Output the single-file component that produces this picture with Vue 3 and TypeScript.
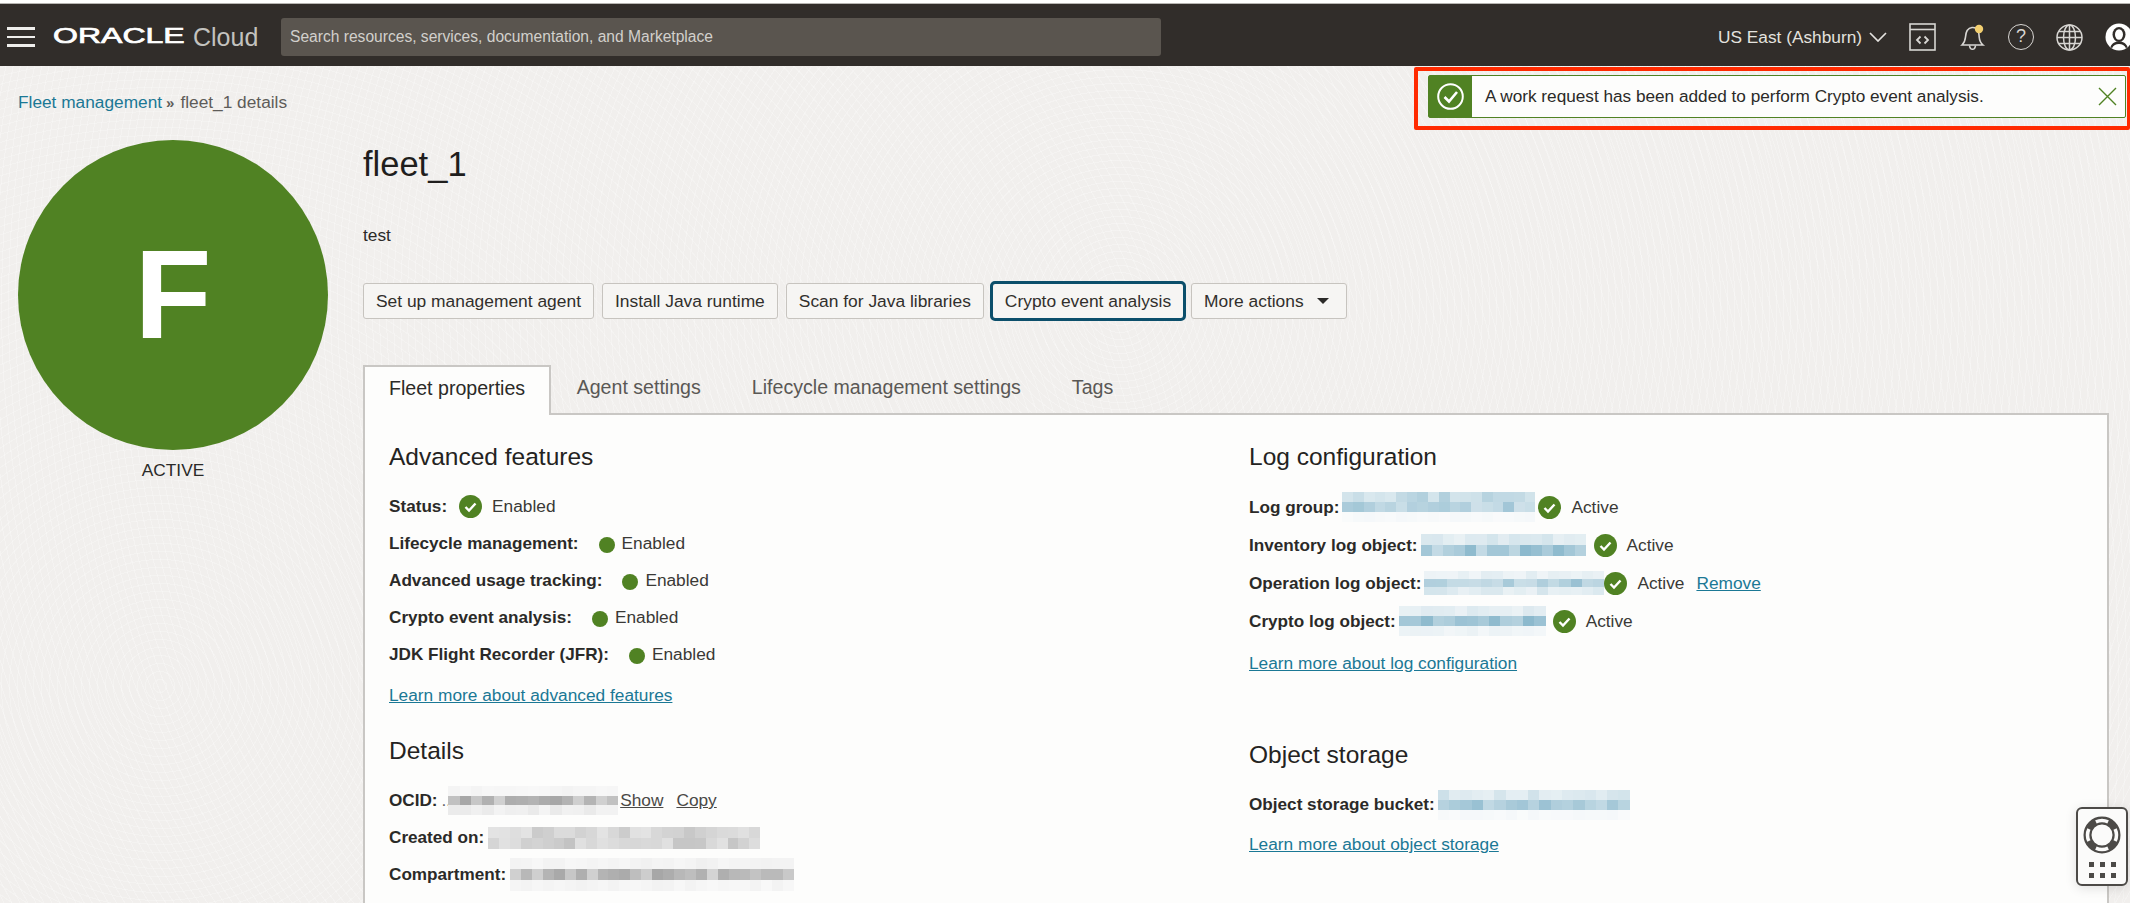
<script setup lang="ts">
type Cell = { color: string }

const greyBase: [number, number, number] = [160, 160, 160]
const blueBase: [number, number, number] = [135, 182, 203]

function mosaic(seed: number, width: number, height: number, base: [number, number, number], rows: number[]) {
  let s = seed
  const cols = Math.round(width / 11)
  const cells: Cell[] = []
  for (let r = 0; r < rows.length; r++) {
    for (let c = 0; c < cols; c++) {
      s = (s * 1103515245 + 12345) % 2147483648
      const k = Math.min(1, rows[r] * (0.55 + (s % 100) / 160))
      const mix = (i: number) => Math.round(253 + (base[i] - 253) * k)
      cells.push({ color: `rgb(${mix(0)},${mix(1)},${mix(2)})` })
    }
  }
  return {
    cells,
    style: {
      width: `${width}px`,
      height: `${height}px`,
      gridTemplateColumns: `repeat(${cols}, 1fr)`,
      gridTemplateRows: `repeat(${rows.length}, 1fr)`,
    },
  }
}

const features = [
  { label: 'Lifecycle management:' },
  { label: 'Advanced usage tracking:' },
  { label: 'Crypto event analysis:' },
  { label: 'JDK Flight Recorder (JFR):' },
]

const logs = [
  { label: 'Log group:', blur: mosaic(7, 193, 30, blueBase, [0.55, 0.7, 0.06]), remove: false, gap: 3 },
  { label: 'Inventory log object:', blur: mosaic(19, 165, 22, blueBase, [0.3, 0.85]), remove: false, gap: 8 },
  { label: 'Operation log object:', blur: mosaic(31, 180, 24, blueBase, [0.2, 0.8, 0.3]), remove: true, gap: 0 },
  { label: 'Crypto log object:', blur: mosaic(43, 147, 30, blueBase, [0.25, 0.85, 0.15]), remove: false, gap: 7 },
]

const ocidBlur = mosaic(5, 170, 29, greyBase, [0.1, 0.8, 0.18])
const createdBlur = mosaic(11, 272, 22, greyBase, [0.5, 0.55])
const compartmentBlur = mosaic(23, 284, 33, greyBase, [0.12, 0.8, 0.1])
const bucketBlur = mosaic(37, 192, 30, blueBase, [0.35, 0.75, 0.06])
</script>

<template>
  <div class="page">
    <header class="topbar">
      <button class="burger" aria-label="Menu"><span></span><span></span><span></span></button>
      <div class="brand">
        <span class="wordmark"><span>ORACLE</span></span>
        <span class="cloud">Cloud</span>
      </div>
      <div class="search">Search resources, services, documentation, and Marketplace</div>
      <div class="region">
        US East (Ashburn)
        <svg width="18" height="10" viewBox="0 0 18 10" fill="none" stroke="#e4e2df" stroke-width="1.7"><path d="M1 1l8 8 8-8" /></svg>
      </div>
      <div class="tools">
        <svg class="tool-code" width="27" height="28" viewBox="0 0 27 28" fill="none" stroke="#d8d6d3" stroke-width="1.6">
          <rect x="1" y="1" width="25" height="26" />
          <path d="M1 6.500h25" />
          <path d="M11.500 13.500l-3.500 3.500 3.500 3.500M15.500 13.500l3.500 3.500-3.500 3.500" stroke-width="1.800" />
        </svg>
        <svg width="26" height="28" viewBox="0 0 26 28" fill="none" stroke="#d8d6d3" stroke-width="1.6">
          <path d="M2 22c2-2 3.200-4 3.500-8 .3-5 2.500-9 6.500-9.500 3-.3 5 1 6.200 3.500.8 2 .8 4 1 6 .3 4 1.500 6 3.800 8z" />
          <path d="M9.500 22.500c.3 2.500 1.500 3.800 3 3.800s2.700-1.300 3-3.800" />
          <circle cx="19" cy="6" r="4.200" fill="#f3cf70" stroke="none" />
        </svg>
        <div class="help-ico">?</div>
        <svg width="27" height="27" viewBox="0 0 27 27" fill="none" stroke="#d8d6d3" stroke-width="1.5">
          <circle cx="13.500" cy="13.500" r="12.500" />
          <ellipse cx="13.500" cy="13.500" rx="6" ry="12.500" />
          <path d="M13.500 1v25M1 13.500h25M3 7.500h21M3 19.500h21" />
        </svg>
        <svg width="28" height="28" viewBox="0 0 28 28">
          <circle cx="14" cy="14" r="13.500" fill="#fff" />
          <path d="M5.500 24c1.500-4 4.500-5.500 8.500-5.500s7 1.500 8.500 5.500l-1.500 1.300c-1.500-3-3.800-4.300-7-4.300s-5.500 1.300-7 4.300z" fill="#312d2a" />
          <ellipse cx="14" cy="11.500" rx="6.500" ry="7.500" fill="#312d2a" />
          <ellipse cx="14" cy="11.500" rx="4" ry="5.200" fill="#fff" />
        </svg>
      </div>
    </header>

    <main class="content">
      <nav class="crumbs">
        <a>Fleet management</a><span class="sep">»</span><span>fleet_1 details</span>
      </nav>

      <div class="body">
        <aside class="side">
          <div class="avatar">F</div>
          <div class="state">ACTIVE</div>
        </aside>

        <section class="detail">
          <h1>fleet_1</h1>
          <p class="desc">test</p>
          <div class="actions">
            <button class="btn">Set up management agent</button>
            <button class="btn">Install Java runtime</button>
            <button class="btn">Scan for Java libraries</button>
            <button class="btn btn--focus">Crypto event analysis</button>
            <button class="btn btn--more">More actions <i class="caret"></i></button>
          </div>

          <div class="tabs">
            <div class="tab tab--active">Fleet properties</div>
            <div class="tab">Agent settings</div>
            <div class="tab">Lifecycle management settings</div>
            <div class="tab">Tags</div>
          </div>

          <div class="panel">
            <div class="col">
              <h2>Advanced features</h2>
              <div class="row row--first">
                <b>Status:</b>
                <svg class="check check--status" width="23" height="23" viewBox="0 0 23 23">
                  <circle cx="11.500" cy="11.500" r="11.500" fill="#508223" />
                  <path d="M6.500 12l3.500 3.500 6.500-7" fill="none" stroke="#fff" stroke-width="2.400" />
                </svg>
                <span>Enabled</span>
              </div>
              <div v-for="f in features" :key="f.label" class="row">
                <b>{{ f.label }}</b>
                <i class="dot"></i>
                <span>Enabled</span>
              </div>
              <a class="more more--features">Learn more about advanced features</a>

              <h2 class="h2--details">Details</h2>
              <div class="row row--first">
                <b>OCID:</b>
                <span class="ocid-dots">..</span>
                <span class="blur blur--ocid" :style="ocidBlur.style"><i v-for="(c, i) in ocidBlur.cells" :key="i" :style="{ background: c.color }"></i></span>
                <a class="plain show">Show</a>
                <a class="plain copy">Copy</a>
              </div>
              <div class="row">
                <b>Created on:</b>
                <span class="blur blur--created" :style="createdBlur.style"><i v-for="(c, i) in createdBlur.cells" :key="i" :style="{ background: c.color }"></i></span>
              </div>
              <div class="row">
                <b>Compartment:</b>
                <span class="blur blur--created" :style="compartmentBlur.style"><i v-for="(c, i) in compartmentBlur.cells" :key="i" :style="{ background: c.color }"></i></span>
              </div>
            </div>

            <div class="col col--right">
              <h2>Log configuration</h2>
              <div v-for="(l, n) in logs" :key="l.label" class="row row--log" :class="{ 'row--first': n === 0 }">
                <b>{{ l.label }}</b>
                <span class="blur blur--log" :style="l.blur.style"><i v-for="(c, i) in l.blur.cells" :key="i" :style="{ background: c.color }"></i></span>
                <svg class="check" :style="{ marginLeft: l.gap + 'px' }" width="23" height="23" viewBox="0 0 23 23">
                  <circle cx="11.500" cy="11.500" r="11.500" fill="#508223" />
                  <path d="M6.500 12l3.500 3.500 6.500-7" fill="none" stroke="#fff" stroke-width="2.400" />
                </svg>
                <span>Active</span>
                <a v-if="l.remove" class="link remove">Remove</a>
              </div>
              <a class="more more--log">Learn more about log configuration</a>

              <h2 class="h2--storage">Object storage</h2>
              <div class="row row--bucket">
                <b>Object storage bucket:</b>
                <span class="blur blur--log" :style="bucketBlur.style"><i v-for="(c, i) in bucketBlur.cells" :key="i" :style="{ background: c.color }"></i></span>
              </div>
              <a class="more more--bucket">Learn more about object storage</a>
            </div>
          </div>
        </section>
      </div>
    </main>

    <!-- toast with the red callout round it -->
    <div class="callout">
      <div class="toast">
        <div class="toast__badge">
          <svg width="27" height="27" viewBox="0 0 27 27" fill="none" stroke="#fff">
            <circle cx="13.500" cy="13.500" r="12.300" stroke-width="2" />
            <path d="M7.500 14l4.500 4.500 8-9.500" stroke-width="2.600" />
          </svg>
        </div>
        <div class="toast__msg">A work request has been added to perform Crypto event analysis.</div>
        <svg class="toast__close" width="19" height="19" viewBox="0 0 19 19" fill="none" stroke="#508223" stroke-width="1.400">
          <path d="M1 1l17 17M18 1L1 18" />
        </svg>
      </div>
    </div>

    <div class="support">
      <svg width="38" height="38" viewBox="0 0 38 38" fill="none">
        <circle cx="19" cy="19" r="14.500" stroke="#4c4a47" stroke-width="8" />
        <path
          d="M12.900 5.900A14.500 14.500 0 0 1 25.100 5.900M32.100 12.900A14.500 14.500 0 0 1 32.100 25.100M25.100 32.100A14.500 14.500 0 0 1 12.900 32.100M5.900 25.100A14.500 14.500 0 0 1 5.900 12.900"
          stroke="#fbfbfa"
          stroke-width="3.500"
        />
      </svg>
      <div class="support__dots">
        <i v-for="n in 6" :key="n"></i>
      </div>
    </div>
  </div>
</template>

<style>
html,
body {
  margin: 0;
  overflow: hidden;
}
</style>

<style scoped>
.page {
  position: relative;
  width: 2130px;
  height: 903px;
  overflow: hidden;
  padding-top: 3px;
  box-sizing: border-box;
  background: #fff;
  font-family: "Liberation Sans", Arial, sans-serif;
  font-size: 17.3px;
  color: #2b2a28;
}

.topbar {
  display: flex;
  align-items: center;
  height: 58px;
  padding-top: 4px;
  border-top: 1px solid #b7b5b2;
  background: #312d2a;
  box-sizing: content-box;
}
.burger {
  display: flex;
  flex: none;
  flex-direction: column;
  gap: 6px;
  width: 28px;
  margin-left: 7px;
  padding: 0;
  border: 0;
  background: none;
}
.burger span {
  display: block;
  height: 2.500px;
  background: #efeeec;
}
.brand {
  display: flex;
  flex: none;
  align-items: center;
  width: 228px;
  margin-left: 18px;
}
.wordmark {
  display: inline-block;
  width: 132px;
  color: #fff;
  font-size: 21.5px;
  line-height: 1;
}
.wordmark span {
  display: inline-block;
  transform: scaleX(1.49);
  transform-origin: left center;
  -webkit-text-stroke: 0.7px #fff;
}
.cloud {
  margin-left: 8px;
  font-size: 25px;
  color: #c3c2bf;
}
.search {
  display: flex;
  flex: none;
  align-items: center;
  width: 880px;
  height: 38px;
  padding-left: 9px;
  box-sizing: border-box;
  border-radius: 3px;
  background: #5a554f;
  color: #d2d0cc;
  font-size: 15.6px;
}
.region {
  display: flex;
  flex: none;
  align-items: center;
  gap: 7px;
  margin-left: 557px;
  color: #e4e2df;
  white-space: nowrap;
}
.tools {
  display: flex;
  flex: none;
  align-items: center;
  gap: 22px;
  margin-left: 22px;
}
.tools > * {
  flex: none;
}
.tool-code {
  margin-right: 2px;
}
.help-ico {
  width: 26px;
  height: 26px;
  border: 1.500px solid #d8d6d3;
  border-radius: 50%;
  box-sizing: border-box;
  color: #d8d6d3;
  font-size: 18px;
  line-height: 23px;
  text-align: center;
}

.content {
  height: 837px;
  padding: 26px 0 0 18px;
  box-sizing: border-box;
  background-color: #f1efed;
  background-image:
    repeating-radial-gradient(circle at 1120px 240px, transparent 0 5px, rgba(255, 255, 255, 0.26) 5px 6px, transparent 6px 7px),
    repeating-radial-gradient(circle at 160px 620px, transparent 0 6px, rgba(255, 255, 255, 0.24) 6px 7px, transparent 7px 8px);
  background-size: 100% 100%;
}
.crumbs {
  display: flex;
  align-items: center;
  height: 20px;
  color: #5e5c59;
}
.crumbs a {
  color: #1b7895;
}
.sep {
  margin: 0 6px 0 4px;
  font-size: 15px;
  font-weight: 700;
}

.body {
  display: flex;
  gap: 35px;
  margin-top: 28px;
}
.side {
  flex: none;
  width: 310px;
  text-align: center;
}
.avatar {
  width: 310px;
  height: 310px;
  border-radius: 50%;
  background: #508223;
  color: #fff;
  font-size: 126px;
  font-weight: 700;
  line-height: 310px;
}
.state {
  margin-top: 10px;
  line-height: 20px;
}

.detail {
  flex: none;
  width: 1746px;
}
h1 {
  margin: 0;
  padding-top: 3px;
  font-size: 34.5px;
  font-weight: 400;
  line-height: 42px;
  color: #1f1e1d;
}
.desc {
  margin: 40px 0 0;
  line-height: 20px;
}
.actions {
  display: flex;
  gap: 8px;
  margin-top: 38px;
}
.btn {
  height: 36px;
  padding: 0 12px;
  border: 1px solid #c7c4bf;
  border-radius: 3px;
  background: #f6f5f3;
  color: #312f2c;
  font: inherit;
  font-size: 17.4px;
  white-space: nowrap;
}
.btn--focus {
  margin-right: -1px;
  outline: 3px solid #0c4f6b;
  outline-offset: -1px;
}
.btn--more {
  display: inline-flex;
  align-items: center;
  padding-right: 17px;
}
.caret {
  width: 0;
  height: 0;
  margin-left: 13px;
  border-left: 6px solid transparent;
  border-right: 6px solid transparent;
  border-top: 6px solid #2b2a28;
}

.tabs {
  display: flex;
  height: 48px;
  margin-top: 46px;
}
.tab {
  display: flex;
  align-items: center;
  padding: 0 25.500px 3px;
  box-sizing: border-box;
  font-size: 19.6px;
  color: #5a5855;
}
.tab--active {
  position: relative;
  z-index: 1;
  height: 50px;
  padding: 0 24px 5px;
  border: 2px solid #c9c7c4;
  border-bottom: 0;
  background: #fdfdfc;
  color: #2b2a28;
}

.panel {
  display: grid;
  grid-template-columns: 860px 1fr;
  height: 560px;
  padding-left: 24px;
  box-sizing: border-box;
  border: 2px solid #c9c7c4;
  background: #fdfdfc;
}
h2 {
  margin: 27px 0 0;
  font-size: 24.5px;
  font-weight: 400;
  line-height: 30px;
  color: #242321;
}
.row {
  display: flex;
  align-items: center;
  height: 37px;
  white-space: nowrap;
  color: #3a3936;
}
.row b {
  color: #2b2a28;
  font-size: 17.15px;
}
.row--first {
  margin-top: 16px;
}
.row--log {
  height: 38px;
}
.dot {
  flex: none;
  width: 16px;
  height: 16px;
  margin: 2px 7px 0 20px;
  border-radius: 50%;
  background: #508223;
}
.check {
  flex: none;
  margin-right: 10px;
}
.check--status {
  margin-left: 12px;
}
.more {
  display: block;
  margin-top: 11px;
  color: #1b7895;
  text-decoration: underline;
  line-height: 20px;
}
.more--features {
  margin-top: 12px;
}
.link {
  color: #1b7895;
  text-decoration: underline;
}
.remove {
  margin-left: 12px;
}
.h2--details {
  margin-top: 31px;
}
.blur {
  display: grid;
  flex: none;
  margin-left: 3px;
}
.blur--ocid {
  margin-left: -3px;
}
.blur--created {
  margin-left: 4px;
}
.ocid-dots {
  margin-left: 4px;
  line-height: 1;
  color: #666;
}
.plain {
  color: #4a4946;
  text-decoration: underline;
}
.show {
  margin-left: 2px;
}
.copy {
  margin-left: 13px;
}
.more--log {
  margin-top: 13px;
}
.h2--storage {
  margin-top: 67px;
}
.row--bucket {
  height: 37px;
  margin-top: 16px;
}
.more--bucket {
  margin-top: 11px;
}

.callout {
  position: absolute;
  top: 67px;
  left: 1414px;
  width: 716px;
  height: 63px;
  padding: 4px 1px 8px 10px;
  box-sizing: border-box;
  border: 4px solid #ff2a00;
  border-right-width: 3px;
  border-radius: 2px;
}
.toast {
  display: flex;
  align-items: center;
  height: 43px;
  box-sizing: border-box;
  border: 1px solid #508223;
  border-radius: 2px;
  background: #fdfdfc;
}
.toast__badge {
  display: flex;
  align-items: center;
  justify-content: center;
  flex: none;
  align-self: stretch;
  width: 43px;
  background: #508223;
}
.toast__msg {
  flex: 1;
  padding-left: 13px;
  color: #2b2a28;
  font-size: 17.2px;
}
.toast__close {
  flex: none;
  margin-right: 8px;
}

.support {
  position: absolute;
  top: 807px;
  left: 2076px;
  display: flex;
  flex-direction: column;
  align-items: center;
  gap: 8px;
  width: 52px;
  height: 79px;
  padding-top: 7px;
  box-sizing: border-box;
  border: 2px solid #4c4a47;
  border-radius: 6px;
  background: #fbfbfa;
  box-shadow: 0 2px 12px rgba(0, 0, 0, 0.12);
}
.support__dots {
  display: grid;
  grid-template-columns: repeat(3, 5px);
  gap: 6px;
}
.support__dots i {
  width: 5px;
  height: 5px;
  background: #4c4a47;
}
</style>
